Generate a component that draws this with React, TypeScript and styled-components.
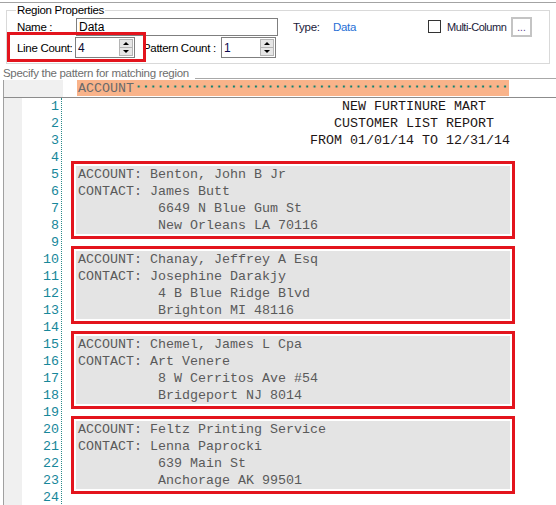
import React from "react";
import styled, { createGlobalStyle } from "styled-components";

const GlobalStyle = createGlobalStyle`
  html, body {
    margin: 0;
    padding: 0;
    background: #ffffff;
    overflow: hidden;
  }
  body {
    font-family: "Liberation Sans", Arial, sans-serif;
    font-size: 11.5px;
    letter-spacing: -0.3px;
  }
`;

const Window = styled.div`
  width: 556px;
  height: 505px;
  padding-top: 2px;
  box-sizing: border-box;
  overflow: hidden;
`;

const TopPanel = styled.div`
  border-top: 1px solid #a3a3a3;
  padding-top: 7px;
`;

const GroupBox = styled.div`
  position: relative;
  margin: 0 6px;
  height: 54px;
  box-sizing: border-box;
  border: 1px solid #d9d9d9;
  padding: 6px 0 0 10px;
`;

const GroupTitle = styled.span`
  position: absolute;
  top: -8px;
  left: 9px;
  padding: 0 1px;
  background: #ffffff;
  line-height: 14px;
  color: #000000;
`;

const Row = styled.div<{ $height: number }>`
  display: flex;
  align-items: center;
  height: ${(p) => p.$height}px;
  & + & {
    margin-top: 1px;
  }
`;

const Label = styled.span<{
  $width: number;
  $color?: string;
  $indent?: number;
  $tight?: boolean;
}>`
  width: ${(p) => p.$width}px;
  margin-left: ${(p) => p.$indent ?? 0}px;
  flex-shrink: 0;
  color: ${(p) => p.$color ?? "#000000"};
  white-space: nowrap;
  ${(p) => (p.$tight ? "font-size: 11px; letter-spacing: -0.45px;" : "")}
`;

const TextBox = styled.div<{ $width: number; $height: number }>`
  display: flex;
  align-items: center;
  width: ${(p) => p.$width}px;
  height: ${(p) => p.$height}px;
  box-sizing: border-box;
  border: 1px solid #7f7f7f;
  background: #ffffff;
  font-size: 12px;
  letter-spacing: 0;
  color: #000000;
`;

const TextValue = styled.span<{ $color?: string }>`
  flex: 1;
  padding-left: 2px;
  color: ${(p) => p.$color ?? "#000000"};
`;

const Spin = styled.div`
  display: flex;
  flex-direction: column;
  align-self: stretch;
  width: 14px;
  margin: 1px;
`;

const SpinButton = styled.div<{ $dir: "up" | "down" }>`
  flex: 1;
  display: flex;
  align-items: center;
  justify-content: center;
  background: #e6e6e6;
  border: 1px solid #b4b4b4;
  ${(p) => (p.$dir === "down" ? "border-top: none;" : "")}

  &::after {
    content: "";
    width: 0;
    height: 0;
    border-left: 3px solid transparent;
    border-right: 3px solid transparent;
    ${(p) =>
      p.$dir === "up"
        ? "border-bottom: 3px solid #000000;"
        : "border-top: 3px solid #000000;"}
  }
`;

const Field = styled.div`
  position: relative;
  display: flex;
  align-items: center;
`;

const Highlight = styled.div`
  position: absolute;
  left: -10px;
  top: -5px;
  width: 139px;
  height: 30px;
  box-sizing: border-box;
  border: 3px solid #e3141d;
  pointer-events: none;
`;

const CheckBox = styled.span`
  width: 13px;
  height: 13px;
  box-sizing: border-box;
  border: 1px solid #333333;
  background: #ffffff;
  margin-right: 6px;
  flex-shrink: 0;
`;

const EllipsisButton = styled.div`
  width: 21px;
  height: 20px;
  box-sizing: border-box;
  border: 2px solid #c4c4c4;
  background: #ffffff;
  display: flex;
  align-items: flex-end;
  justify-content: center;
  padding-bottom: 3px;
  font-size: 10px;
  line-height: 8px;
  letter-spacing: 0;
  color: #5a3a8a;
`;

const HintRow = styled.div`
  display: flex;
  align-items: flex-end;
  margin-top: 2px;
  height: 14px;
  padding-left: 3px;
`;

const Hint = styled.span`
  color: #6e6e6e;
  line-height: 14px;
  white-space: nowrap;
`;

const HintRule = styled.div`
  flex: 1;
  margin: 0 0 1px 6px;
  border-bottom: 1px solid #a8a8a8;
`;

const PatternPanel = styled.div`
  display: flex;
  height: 17px;
  margin-left: 3px;
  border-left: 1px solid #a0a0a0;
  border-bottom: 1px solid #8c8c8c;
`;

const PatternGutter = styled.div`
  width: 59px;
  background: #f0f0f0;
`;

const PatternSpacer = styled.div`
  width: 14px;
`;

const PatternBar = styled.div`
  display: flex;
  align-items: center;
  width: 432px;
  height: 16px;
  padding-left: 1px;
  background: #f9b38a;
  font-family: "Liberation Mono", "Courier New", monospace;
  font-size: 13.33px;
  letter-spacing: 0;
  color: #6a6a6a;
  box-sizing: border-box;
`;

const PatternDots = styled.span`
  flex: 1;
  align-self: stretch;
  margin-left: 1px;
  background-image: radial-gradient(circle, #12806f 0 1.2px, transparent 1.5px);
  background-size: 7.33px 16px;
  background-position: 0 -1.5px;
  background-repeat: repeat-x;
`;

const Editor = styled.div`
  display: flex;
  margin-left: 3px;
  border-left: 1px solid #a0a0a0;
  font-family: "Liberation Mono", "Courier New", monospace;
  font-size: 13.33px;
  letter-spacing: 0;
  line-height: 17px;
`;

const Gutter = styled.div`
  width: 18px;
  background: #f0f0f0;
  flex-shrink: 0;
`;

const Numbers = styled.div`
  width: 40px;
  flex-shrink: 0;
  box-sizing: border-box;
  padding-right: 2px;
  text-align: right;
  color: #17879a;
  border-right: 1px dotted #2a8a8a;
`;

const Content = styled.div`
  flex: 1;
`;

const Line = styled.div<{ $dark?: boolean }>`
  height: 17px;
  padding-left: 16px;
  white-space: pre;
  color: ${(p) => (p.$dark ? "#1e1616" : "#5a5a5a")};
`;

const Record = styled.div`
  margin: 0 46px 0 14px;
  background: #e4e4e4;
  outline: 3px solid #e3141d;
  outline-offset: 2px;

  ${Line} {
    padding-left: 2px;
  }
`;

const header = [
  "                                 NEW FURTINURE MART",
  "                                CUSTOMER LIST REPORT",
  "                             FROM 01/01/14 TO 12/31/14",
];

const records = [
  ["Benton, John B Jr", "James Butt", "6649 N Blue Gum St", "New Orleans LA 70116"],
  ["Chanay, Jeffrey A Esq", "Josephine Darakjy", "4 B Blue Ridge Blvd", "Brighton MI 48116"],
  ["Chemel, James L Cpa", "Art Venere", "8 W Cerritos Ave #54", "Bridgeport NJ 8014"],
  ["Feltz Printing Service", "Lenna Paprocki", "639 Main St", "Anchorage AK 99501"],
];

const Spinner: React.FC<{ width: number; value: string; color?: string }> = ({
  width,
  value,
  color,
}) => (
  <TextBox $width={width} $height={21}>
    <TextValue $color={color}>{value}</TextValue>
    <Spin>
      <SpinButton $dir="up" />
      <SpinButton $dir="down" />
    </Spin>
  </TextBox>
);

const App: React.FC = () => {
  return (
    <>
      <GlobalStyle />
      <Window>
        <TopPanel>
          <GroupBox>
            <GroupTitle>Region Properties</GroupTitle>
            <Row $height={19}>
              <Label $width={59}>Name :</Label>
              <TextBox $width={202} $height={18}>
                <TextValue>Data</TextValue>
              </TextBox>
              <Label $width={40} $indent={15} $color="#1a1a3a">
                Type:
              </Label>
              <Label $width={95} $color="#1f6fd6">
                Data
              </Label>
              <CheckBox />
              <Label $width={64} $color="#1a1a3a" $tight>
                Multi-Column
              </Label>
              <EllipsisButton>...</EllipsisButton>
            </Row>
            <Row $height={21}>
              <Field>
                <Highlight />
                <Label $width={58}>Line Count:</Label>
                <Spinner width={60} value="4" color="#0a0a30" />
              </Field>
              <Label $width={78} $indent={8}>
                Pattern Count :
              </Label>
              <Spinner width={55} value="1" color="#0a0a50" />
            </Row>
          </GroupBox>
          <HintRow>
            <Hint>Specify the pattern for matching region</Hint>
            <HintRule />
          </HintRow>
          <PatternPanel>
            <PatternGutter />
            <PatternSpacer />
            <PatternBar>
              ACCOUNT
              <PatternDots />
            </PatternBar>
          </PatternPanel>
        </TopPanel>
        <Editor>
          <Gutter />
          <Numbers>
            {Array.from({ length: 24 }, (_, i) => (
              <div key={i}>{i + 1}</div>
            ))}
          </Numbers>
          <Content>
            {header.map((h, i) => (
              <Line key={i} $dark>
                {h}
              </Line>
            ))}
            <Line />
            {records.map((r, i) => (
              <React.Fragment key={i}>
                <Record>
                  <Line>{"ACCOUNT: " + r[0]}</Line>
                  <Line>{"CONTACT: " + r[1]}</Line>
                  <Line>{"          " + r[2]}</Line>
                  <Line>{"          " + r[3]}</Line>
                </Record>
                <Line />
              </React.Fragment>
            ))}
          </Content>
        </Editor>
      </Window>
    </>
  );
};

export default App;
